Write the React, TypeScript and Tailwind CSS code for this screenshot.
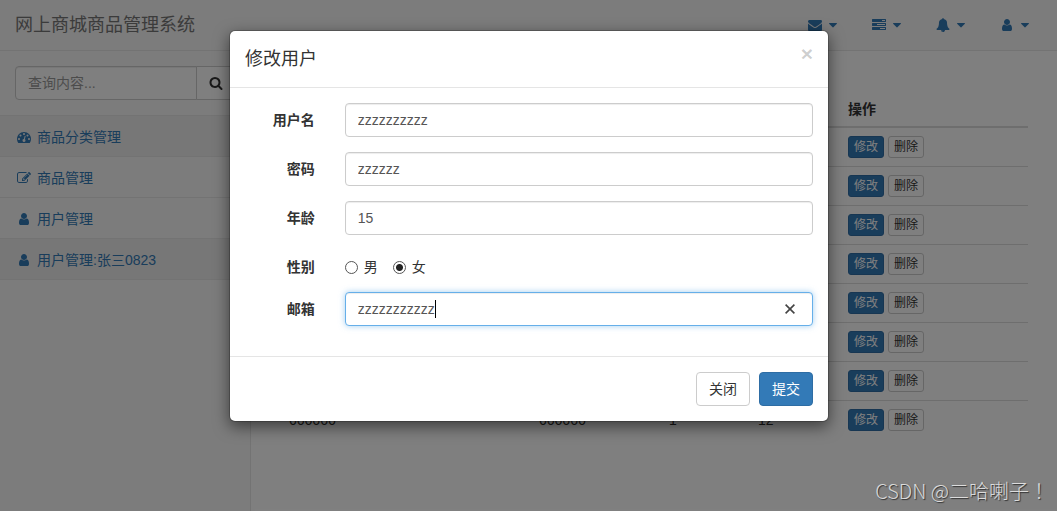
import { useState } from "react";

const icons = {
  envelope:
    "M1792 710v794q0 66-47 113t-113 47h-1472q-66 0-113-47t-47-113v-794q44 49 101 87 362 246 497 345 57 42 92.5 65.5t94.5 48 110 24.5h2q51 0 110-24.5t94.5-48 92.5-65.5q170-123 498-345 57-39 100-87zm0-294q0 79-49 151t-122 123q-376 261-468 325-10 7-42.5 31t-54 38.5-52 32.5-57.5 27-50 9h-2q-23 0-50-9t-57.5-27-52-32.5-54-38.5-42.5-31q-91-64-262-182.5t-205-142.5q-62-42-117-115.5t-55-136.5q0-78 41.5-130t118.5-52h1472q65 0 112.5 47t47.5 113z",
  tasks:
    "M1024 1408h640v-128h-640v128zm-384-512h1024v-128h-1024v128zm640-512h384v-128h-384v128zm512 832v256q0 26-19 45t-45 19h-1664q-26 0-45-19t-19-45v-256q0-26 19-45t45-19h1664q26 0 45 19t19 45zm0-512v256q0 26-19 45t-45 19h-1664q-26 0-45-19t-19-45v-256q0-26 19-45t45-19h1664q26 0 45 19t19 45zm0-512v256q0 26-19 45t-45 19h-1664q-26 0-45-19t-19-45v-256q0-26 19-45t45-19h1664q26 0 45 19t19 45z",
  bell:
    "M912 1696q0-16-16-16-59 0-101.5-42.5t-42.5-101.5q0-16-16-16t-16 16q0 73 51.5 124.5t124.5 51.5q16 0 16-16zm816-288q0 52-38 90t-90 38h-448q0 106-75 181t-181 75-181-75-75-181h-448q-52 0-90-38t-38-90q50-42 91-88t85-119.5 74.5-158.5 50-206 19.5-260q0-152 117-282.5t307-158.5q-8-19-8-39 0-40 28-68t68-28 68 28 28 68q0 20-8 39 190 28 307 158.5t117 282.5q0 139 19.5 260t50 206 74.5 158.5 85 119.5 91 88z",
  user:
    "M1536 1399q0 109-62.5 187t-150.5 78h-854q-88 0-150.5-78t-62.5-187q0-85 8.5-160.5t31.5-152 58.5-131 94-89 134.5-34.5q131 128 313 128t313-128q76 0 134.5 34.5t94 89 58.5 131 31.5 152 8.5 160.5zm-256-887q0 159-112.5 271.5t-271.5 112.5-271.5-112.5-112.5-271.5 112.5-271.5 271.5-112.5 271.5 112.5 112.5 271.5z",
  caret:
    "M1408 704q0 26-19 45l-448 448q-19 19-45 19t-45-19l-448-448q-19-19-19-45t19-45 45-19h896q26 0 45 19t19 45z",
  search:
    "M1216 832q0-185-131.5-316.5t-316.5-131.5-316.5 131.5-131.5 316.5 131.5 316.5 316.5 131.5 316.5-131.5 131.5-316.5zm512 832q0 52-38 90t-90 38q-54 0-90-38l-343-342q-179 124-399 124-143 0-273.5-55.5t-225-150-150-225-55.5-273.5 55.5-273.5 150-225 225-150 273.5-55.5 273.5 55.5 225 150 150 225 55.5 273.5q0 220-124 399l343 343q37 37 37 90z",
  edit:
    "M888 1184l116-116-152-152-116 116v56h96v96h56zm440-720q-16-16-33 1l-350 350q-17 17-1 33t33-1l350-350q17-17 1-33zm80 594v190q0 119-84.5 203.5t-203.5 84.5h-832q-119 0-203.5-84.5t-84.5-203.5v-832q0-119 84.5-203.5t203.5-84.5h832q63 0 117 25 15 7 18 23 3 17-9 29l-49 49q-14 14-32 8-23-6-45-6h-832q-66 0-113 47t-47 113v832q0 66 47 113t113 47h832q66 0 113-47t47-113v-126q0-13 9-22l64-64q15-15 35-7t20 29zm-96-738l288 288-672 672h-288v-288zm444 132l-92 92-288-288 92-92q28-28 68-28t68 28l152 152q28 28 28 68t-28 68z",
  dashboard:
    "M384 1152q0-53-37.5-90.5t-90.5-37.5-90.5 37.5-37.5 90.5 37.5 90.5 90.5 37.5 90.5-37.5 37.5-90.5zm192-448q0-53-37.5-90.5t-90.5-37.5-90.5 37.5-37.5 90.5 37.5 90.5 90.5 37.5 90.5-37.5 37.5-90.5zm428 481l101-382q6-26-7.5-48.5t-38.5-29.5-48 6.5-30 39.5l-101 382q-60 5-107 43.5t-63 98.5q-20 77 20 146t117 89 146-20 89-117q16-60-6-117t-72-91zm660-33q0-53-37.5-90.5t-90.5-37.5-90.5 37.5-37.5 90.5 37.5 90.5 90.5 37.5 90.5-37.5 37.5-90.5zm-640-640q0-53-37.5-90.5t-90.5-37.5-90.5 37.5-37.5 90.5 37.5 90.5 90.5 37.5 90.5-37.5 37.5-90.5zm448 192q0-53-37.5-90.5t-90.5-37.5-90.5 37.5-37.5 90.5 37.5 90.5 90.5 37.5 90.5-37.5 37.5-90.5zm320 448q0 261-141 483-19 29-54 29h-1402q-35 0-54-29-141-221-141-483 0-182 71-348t191-286 286-191 348-71 348 71 286 191 191 286 71 348z",
};

type IconName = keyof typeof icons;

function Icon({ name }: { name: IconName }) {
  return (
    <svg viewBox="0 0 1792 1792" className="size-3.5 shrink-0 fill-current" aria-hidden="true">
      <path d={icons[name]} />
    </svg>
  );
}

const topLinks: { icon: IconName; label: string }[] = [
  { icon: "envelope", label: "消息" },
  { icon: "tasks", label: "任务" },
  { icon: "bell", label: "通知" },
  { icon: "user", label: "账户" },
];

const menu: { icon: IconName; text: string; active?: boolean }[] = [
  { icon: "dashboard", text: "商品分类管理", active: true },
  { icon: "edit", text: "商品管理" },
  { icon: "user", text: "用户管理" },
  { icon: "user", text: "用户管理:张三0823", active: true },
];

const users = Array.from({ length: 8 }, () => ({ name: "666666", password: "666666", sex: 1, age: 12 }));

const inputClass =
  "h-[34px] w-full rounded border border-[#ccc] bg-white px-3 text-sm text-[#555] shadow-[inset_0_1px_1px_rgba(0,0,0,0.075)] outline-none";

function Navbar() {
  return (
    <header className="flex h-[51px] items-center justify-between border-b border-[#e7e7e7] bg-[#f8f8f8] pr-[25px] pl-[15px]">
      <a href="#" className="text-lg text-[#777]">
        网上商城商品管理系统
      </a>
      <nav className="flex gap-8 text-[#337ab7]">
        {topLinks.map((link) => (
          <a key={link.icon} href="#" aria-label={link.label} className="flex items-center gap-1">
            <Icon name={link.icon} />
            <Icon name="caret" />
          </a>
        ))}
      </nav>
    </header>
  );
}

function Sidebar() {
  return (
    <aside className="w-[251px] shrink-0 border-r border-[#e7e7e7] bg-[#f8f8f8]">
      <form className="flex border-b border-[#e7e7e7] p-[15px]">
        <input
          type="text"
          aria-label="查询内容"
          placeholder="查询内容..."
          className="h-[34px] min-w-0 flex-1 rounded-l border border-[#ccc] bg-white px-3 text-sm shadow-[inset_0_1px_1px_rgba(0,0,0,0.075)] placeholder:text-[#999]"
        />
        <button
          type="button"
          aria-label="查询"
          className="-ml-px flex h-[34px] w-[39px] items-center justify-center rounded-r border border-[#ccc] bg-white text-[#333]"
        >
          <Icon name="search" />
        </button>
      </form>
      <ul>
        {menu.map((item) => (
          <li key={item.text} className="border-b border-[#e7e7e7]">
            <a
              href="#"
              className={`flex h-10 items-center gap-1.5 pt-0.5 pr-[15px] pl-[17px] text-[#337ab7] ${item.active ? "bg-[#eee]" : ""}`}
            >
              <Icon name={item.icon} />
              {item.text}
            </a>
          </li>
        ))}
      </ul>
    </aside>
  );
}

function UserTable() {
  return (
    <table className="w-full table-fixed text-left">
      <colgroup>
        <col className="w-[250px]" />
        <col className="w-[130px]" />
        <col className="w-[89px]" />
        <col className="w-[90px]" />
        <col />
      </colgroup>
      <thead>
        <tr className="h-9 border-b-2 border-[#ddd]">
          <th className="px-2">用户名</th>
          <th className="px-2">密码</th>
          <th className="px-2">性别</th>
          <th className="px-2">年龄</th>
          <th className="px-2">操作</th>
        </tr>
      </thead>
      <tbody>
        {users.map((user, i) => (
          <tr key={i} className="h-[39px] border-b border-[#ddd] last:border-b-0">
            <td className="px-2">{user.name}</td>
            <td className="px-2">{user.password}</td>
            <td className="px-2">{user.sex}</td>
            <td className="px-2">{user.age}</td>
            <td className="px-2">
              <div className="flex gap-1 text-xs">
                <button type="button" className="h-[22px] rounded-[3px] border border-[#2e6da4] bg-[#337ab7] px-[5px] text-white">
                  修改
                </button>
                <button type="button" className="h-[22px] rounded-[3px] border border-[#ccc] bg-white px-[5px] text-[#333]">
                  删除
                </button>
              </div>
            </td>
          </tr>
        ))}
      </tbody>
    </table>
  );
}

function EditUserModal() {
  const [name, setName] = useState("zzzzzzzzzz");
  const [password, setPassword] = useState("zzzzzz");
  const [age, setAge] = useState("15");
  const [sex, setSex] = useState("女");
  const [email, setEmail] = useState("zzzzzzzzzzz");

  const labelClass = "w-1/6 shrink-0 pr-[15px] text-right font-bold";
  const fields = [
    { id: "name", label: "用户名", value: name, set: setName },
    { id: "password", label: "密码", value: password, set: setPassword },
    { id: "age", label: "年龄", value: age, set: setAge },
  ];

  return (
    <div
      role="dialog"
      aria-modal="true"
      aria-labelledby="edit-title"
      className="w-[600px] max-w-full rounded-md border border-black/20 bg-white bg-clip-padding shadow-[0_5px_15px_rgba(0,0,0,0.5)]"
    >
      <div className="flex items-start justify-between border-b border-[#e5e5e5] p-[15px]">
        <h4 id="edit-title" className="text-lg leading-[26px]">
          修改用户
        </h4>
        <button type="button" aria-label="关闭窗口" className="text-[21px] leading-4 font-bold text-black/20">
          ×
        </button>
      </div>

      <form id="edit-form" className="flex flex-col gap-[15px] pt-[15px] pb-[30px]">
        {fields.map((field) => (
          <div key={field.id} className="flex items-center">
            <label htmlFor={field.id} className={labelClass}>
              {field.label}
            </label>
            <div className="flex-1 px-[15px]">
              <input
                id={field.id}
                type="text"
                value={field.value}
                onChange={(e) => field.set(e.target.value)}
                className={inputClass}
              />
            </div>
          </div>
        ))}

        <div role="radiogroup" aria-labelledby="sex-label" className="flex items-center pt-[7px]">
          <span id="sex-label" className={labelClass}>
            性别
          </span>
          <div className="flex flex-1 gap-[15px] px-[15px]">
            {["男", "女"].map((value) => (
              <label key={value} className="flex items-center gap-1.5">
                <input
                  type="radio"
                  name="sex"
                  checked={sex === value}
                  onChange={() => setSex(value)}
                  className="size-[13px] appearance-none rounded-full border border-[#555] bg-white checked:bg-[radial-gradient(circle,#222_3px,transparent_4px)]"
                />
                {value}
              </label>
            ))}
          </div>
        </div>

        <div className="flex items-center">
          <label htmlFor="email" className={labelClass}>
            邮箱
          </label>
          <div className="flex-1 px-[15px]">
            <div className="relative">
              <input
                id="email"
                type="text"
                value={email}
                onChange={(e) => setEmail(e.target.value)}
                className="h-[34px] w-full rounded border border-[#66afe9] bg-white px-3 text-sm text-[#555] shadow-[inset_0_1px_1px_rgba(0,0,0,0.075),0_0_6px_rgba(102,175,233,0.6)] outline-none"
              />
              {/* text cursor */}
              <span className="absolute inset-y-2 left-[90px] w-px bg-black" />
              <button
                type="button"
                aria-label="清除"
                onClick={() => setEmail("")}
                className="absolute inset-y-0 right-[18px] flex items-center text-[#444]"
              >
                <svg viewBox="0 0 10 10" className="size-2.5 stroke-current stroke-[1.6]" aria-hidden="true">
                  <path d="M0.6 0.6 9.4 9.4M9.4 0.6 0.6 9.4" />
                </svg>
              </button>
            </div>
          </div>
        </div>
      </form>

      <div className="flex justify-end gap-[9px] border-t border-[#e5e5e5] p-[15px]">
        <button type="button" className="h-[34px] rounded border border-[#ccc] bg-white px-3 text-[#333]">
          关闭
        </button>
        <button type="submit" form="edit-form" className="h-[34px] rounded border border-[#2e6da4] bg-[#337ab7] px-3 text-white">
          提交
        </button>
      </div>
    </div>
  );
}

export default function App() {
  return (
    <div className="relative flex min-h-screen flex-col overflow-hidden bg-white font-['Liberation_Sans','Noto_Sans_CJK_SC',sans-serif] text-sm leading-5 text-[#333]">
      <Navbar />
      <div className="flex flex-1">
        <Sidebar />
        <main className="min-w-0 flex-1 pt-10 pr-[29px] pl-[30px]">
          <UserTable />
        </main>
      </div>

      {/* backdrop */}
      <div className="absolute inset-0 flex items-start justify-center bg-black/50 pt-[30px] pl-px">
        <EditUserModal />
      </div>

      <p className="absolute right-2 bottom-2 font-['Noto_Sans_CJK_TC',sans-serif] text-xl leading-6 font-light text-white/75 [text-shadow:1px_1px_1px_rgba(0,0,0,0.6)]">
        CSDN @二哈喇子！
      </p>
    </div>
  );
}
